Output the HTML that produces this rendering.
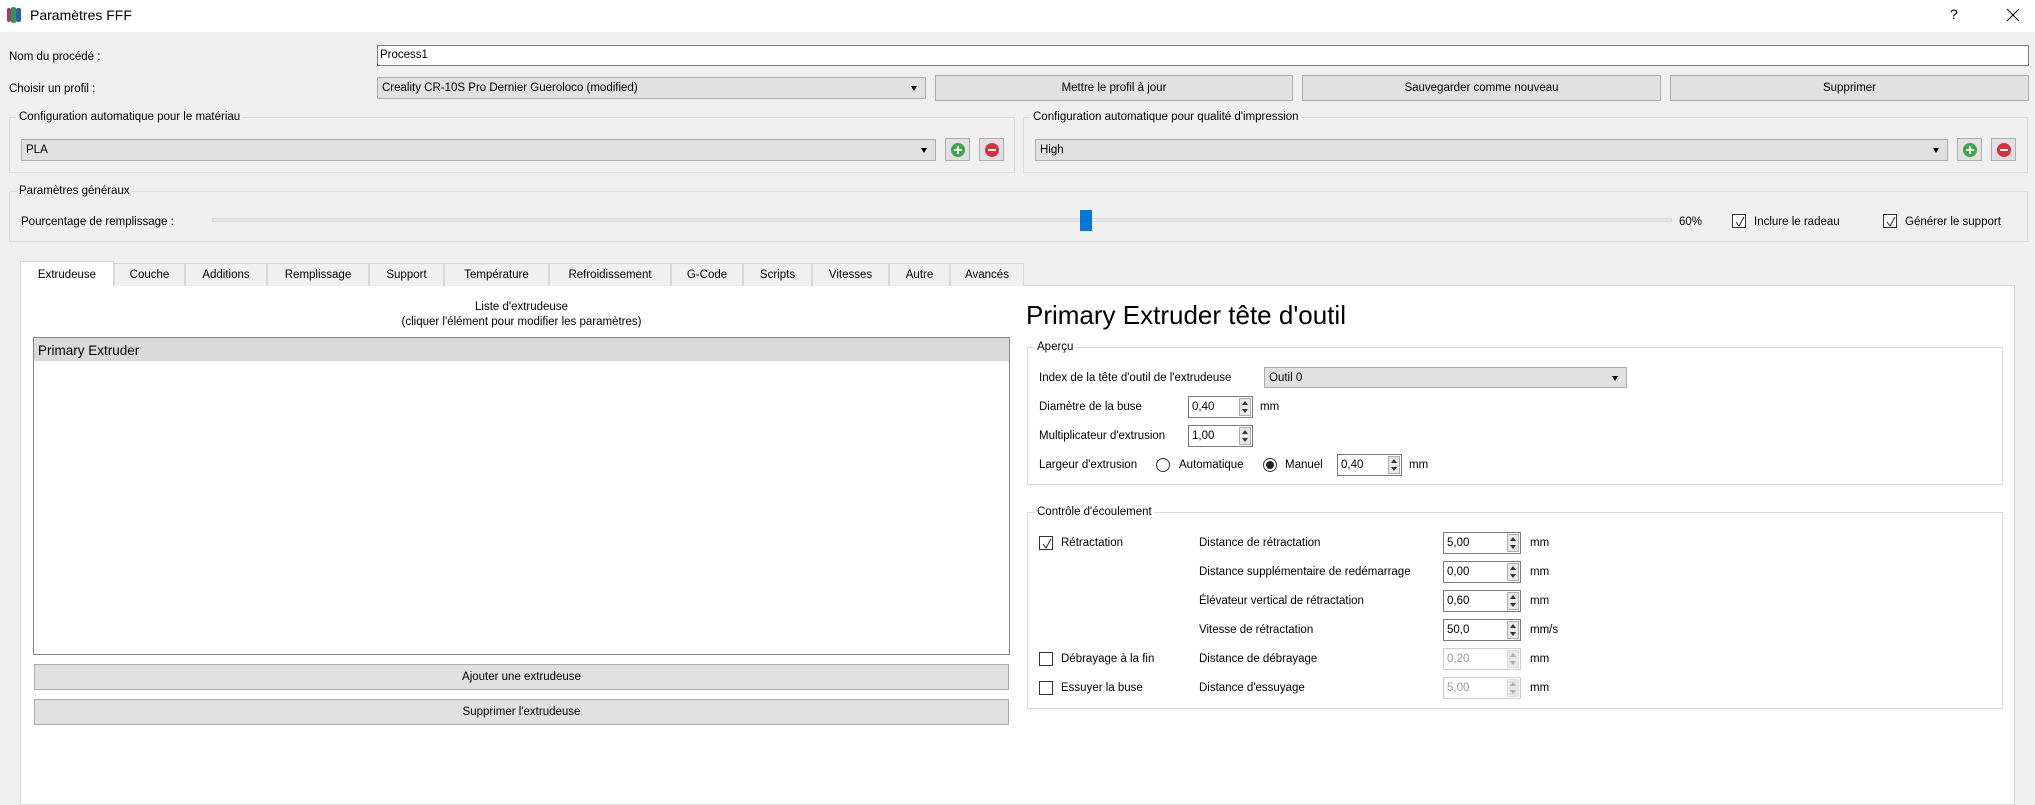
<!DOCTYPE html>
<html><head><meta charset="utf-8"><style>
*{box-sizing:border-box;margin:0;padding:0}
body{width:2035px;height:797px;background:#f0f0f0;font-family:"Liberation Sans",sans-serif;font-size:11.5px;color:#000;position:relative;overflow:hidden}
.a{position:absolute;white-space:nowrap}
.t{position:absolute;white-space:nowrap;line-height:14px;transform:translateY(-7px)}
.btn{position:absolute;background:#e1e1e1;border:1px solid #adadad;text-align:center;display:flex;align-items:center;justify-content:center}
.combo{position:absolute;background:#e1e1e1;border:1px solid #adadad;padding-left:4px;display:flex;align-items:center}
.combo:after{content:"";position:absolute;right:8px;top:50%;margin-top:-2px;border-left:3.5px solid transparent;border-right:3.5px solid transparent;border-top:5px solid #000}
.grp{position:absolute;border:1px solid #dcdcdc}
.gt{position:absolute;background:#f0f0f0;padding:0 2px;line-height:14px}
.gtw{background:#fff}
.cb{position:absolute;width:14px;height:14px;border:1px solid #333;background:#fff}
.cb svg{position:absolute;left:1px;top:1px}
.spin{position:absolute;height:22px;border:1px solid #7a7a7a;background:#fff;padding-left:3px;display:flex;align-items:center}
.spin .ar{position:absolute;right:1px;top:1px;bottom:1px;width:12px;border:1px solid #adadad;background:#e8e8e8}
.spin .ar:before{content:"";position:absolute;left:2px;top:2px;border-left:3px solid transparent;border-right:3px solid transparent;border-bottom:4px solid #333}
.spin .ar:after{content:"";position:absolute;left:2px;bottom:2px;border-left:3px solid transparent;border-right:3px solid transparent;border-top:4px solid #333}
.spin.dis{border-color:#ccc;color:#999}
.spin.dis .ar{border-color:#ddd}
.spin.dis .ar:before{border-bottom-color:#aaa}.spin.dis .ar:after{border-top-color:#aaa}
.tab{position:absolute;top:263px;height:23px;background:#f0f0f0;border:1px solid #d9d9d9;border-bottom:none;display:flex;align-items:center;justify-content:center}
.ib{position:absolute;width:25px;height:23px;border:1px solid #adadad;background:#e1e1e1}
.ib i{position:absolute;left:5px;top:4px;width:14px;height:14px;border-radius:50%}
.ib i:before{content:"";position:absolute;left:3px;top:6px;width:8px;height:2px;background:#fff}
.ib.p i{background:#3aa64a}.ib.p i:after{content:"";position:absolute;left:6px;top:3px;width:2px;height:8px;background:#fff}
.ib.m i{background:#d8303a}
.radio{position:absolute;width:14px;height:14px;border:1px solid #333;border-radius:50%;background:#fff}
</style></head><body>
<div class="a" style="left:0;top:0;width:2035px;height:32px;background:#fff"></div>
<div class="a" style="left:7px;top:8px;width:4px;height:14px;background:#b22f7a;border-radius:2px"></div>
<div class="a" style="left:11px;top:7px;width:5px;height:16px;background:#2a9a48;border-radius:2px"></div>
<div class="a" style="left:16px;top:8px;width:5px;height:14px;background:#2d5fb5;border-radius:2px"></div>
<div class="t" style="left:30px;top:15px;font-size:14px">Paramètres FFF</div>
<div class="t" style="left:1950px;top:14px;font-size:14px">?</div>
<svg class="a" style="left:2006px;top:8px" width="14" height="14"><path d="M1 1L13 13M13 1L1 13" stroke="#000" stroke-width="1"/></svg>

<div class="t" style="left:9px;top:57px">Nom du procédé :</div>
<div class="a" style="left:377px;top:45px;width:1652px;height:21px;background:#fff;border:1px solid #7a7a7a;padding-left:2px;line-height:19px">Process1</div>
<div class="t" style="left:9px;top:89px">Choisir un profil :</div>
<div class="combo" style="left:377px;top:77px;width:549px;height:22px">Creality CR-10S Pro Dernier Gueroloco (modified)</div>
<div class="btn" style="left:935px;top:75px;width:358px;height:26px">Mettre le profil à jour</div>
<div class="btn" style="left:1302px;top:75px;width:359px;height:26px">Sauvegarder comme nouveau</div>
<div class="btn" style="left:1670px;top:75px;width:359px;height:26px">Supprimer</div>

<div class="grp" style="left:9px;top:117px;width:1006px;height:56px"></div>
<div class="gt" style="left:17px;top:110px">Configuration automatique pour le matériau</div>
<div class="combo" style="left:21px;top:139px;width:915px;height:22px">PLA</div>
<div class="ib p" style="left:945px;top:138px"><i></i></div>
<div class="ib m" style="left:979px;top:138px"><i></i></div>

<div class="grp" style="left:1023px;top:117px;width:1005px;height:56px"></div>
<div class="gt" style="left:1031px;top:110px">Configuration automatique pour qualité d'impression</div>
<div class="combo" style="left:1035px;top:139px;width:913px;height:22px">High</div>
<div class="ib p" style="left:1957px;top:138px"><i></i></div>
<div class="ib m" style="left:1991px;top:138px"><i></i></div>

<div class="grp" style="left:9px;top:191px;width:2019px;height:51px"></div>
<div class="gt" style="left:17px;top:184px">Paramètres généraux</div>
<div class="t" style="left:21px;top:222px">Pourcentage de remplissage :</div>
<div class="a" style="left:212px;top:218px;width:1460px;height:4px;background:#e7e7e7;border:1px solid #d6d6d6"></div>
<div class="a" style="left:1080px;top:210px;width:12px;height:21px;background:#0078d7"></div>
<div class="t" style="left:1679px;top:222px">60%</div>
<div class="cb" style="left:1732px;top:214px"><svg width="12" height="12"><path d="M2 6L5 10L10 1" fill="none" stroke="#222" stroke-width="1"/></svg></div>
<div class="t" style="left:1754px;top:222px">Inclure le radeau</div>
<div class="cb" style="left:1883px;top:214px"><svg width="12" height="12"><path d="M2 6L5 10L10 1" fill="none" stroke="#222" stroke-width="1"/></svg></div>
<div class="t" style="left:1905px;top:222px">Générer le support</div>

<div class="a" style="left:20px;top:285px;width:1995px;height:520px;background:#fff;border:1px solid #d9d9d9"></div>
<div class="tab" style="left:20px;top:261px;height:26px;width:94px;background:#fff;border-color:#d9d9d9">Extrudeuse</div>
<div class="tab" style="left:114px;width:71px">Couche</div>
<div class="tab" style="left:185px;width:82px">Additions</div>
<div class="tab" style="left:267px;width:102px">Remplissage</div>
<div class="tab" style="left:369px;width:75px">Support</div>
<div class="tab" style="left:444px;width:105px">Température</div>
<div class="tab" style="left:549px;width:122px">Refroidissement</div>
<div class="tab" style="left:671px;width:72px">G-Code</div>
<div class="tab" style="left:743px;width:69px">Scripts</div>
<div class="tab" style="left:812px;width:77px">Vitesses</div>
<div class="tab" style="left:889px;width:61px">Autre</div>
<div class="tab" style="left:950px;width:74px">Avancés</div>

<div class="t" style="left:34px;width:975px;text-align:center;top:307px">Liste d'extrudeuse</div>
<div class="t" style="left:34px;width:975px;text-align:center;top:322px">(cliquer l'élément pour modifier les paramètres)</div>
<div class="a" style="left:33px;top:337px;width:977px;height:318px;border:1px solid #828790;background:#fff"></div>
<div class="a" style="left:34px;top:338px;width:975px;height:23px;background:#d9d9d9"></div>
<div class="t" style="left:38px;top:351px;font-size:13.5px">Primary Extruder</div>
<div class="btn" style="left:34px;top:664px;width:975px;height:26px">Ajouter une extrudeuse</div>
<div class="btn" style="left:34px;top:699px;width:975px;height:26px">Supprimer l'extrudeuse</div>

<div class="a" style="left:1026px;top:298px;font-size:26px;line-height:34px">Primary Extruder tête d'outil</div>
<div class="grp" style="left:1027px;top:347px;width:976px;height:138px"></div>
<div class="gt gtw" style="left:1035px;top:340px">Aperçu</div>
<div class="t" style="left:1039px;top:378px">Index de la tête d'outil de l'extrudeuse</div>
<div class="combo" style="left:1264px;top:367px;width:363px;height:21px">Outil 0</div>
<div class="t" style="left:1039px;top:407px">Diamètre de la buse</div>
<div class="spin" style="left:1188px;top:396px;width:65px">0,40<span class="ar"></span></div>
<div class="t" style="left:1260px;top:407px">mm</div>
<div class="t" style="left:1039px;top:436px">Multiplicateur d'extrusion</div>
<div class="spin" style="left:1188px;top:425px;width:65px">1,00<span class="ar"></span></div>
<div class="t" style="left:1039px;top:465px">Largeur d'extrusion</div>
<div class="radio" style="left:1156px;top:458px"></div>
<div class="t" style="left:1179px;top:465px">Automatique</div>
<div class="radio" style="left:1263px;top:458px"><div style="position:absolute;left:2px;top:2px;width:8px;height:8px;border-radius:50%;background:#222"></div></div>
<div class="t" style="left:1285px;top:465px">Manuel</div>
<div class="spin" style="left:1337px;top:454px;width:65px">0,40<span class="ar"></span></div>
<div class="t" style="left:1409px;top:465px">mm</div>

<div class="grp" style="left:1027px;top:512px;width:976px;height:197px"></div>
<div class="gt gtw" style="left:1035px;top:505px">Contrôle d'écoulement</div>
<div class="cb" style="left:1039px;top:536px"><svg width="12" height="12"><path d="M2 6L5 10L10 1" fill="none" stroke="#222" stroke-width="1"/></svg></div>
<div class="t" style="left:1061px;top:543px">Rétractation</div>
<div class="cb" style="left:1039px;top:652px"></div>
<div class="t" style="left:1061px;top:659px">Débrayage à la fin</div>
<div class="cb" style="left:1039px;top:681px"></div>
<div class="t" style="left:1061px;top:688px">Essuyer la buse</div>

<div class="t" style="left:1199px;top:543px">Distance de rétractation</div>
<div class="spin" style="left:1443px;top:532px;width:78px">5,00<span class="ar"></span></div>
<div class="t" style="left:1530px;top:543px">mm</div>
<div class="t" style="left:1199px;top:572px">Distance supplémentaire de redémarrage</div>
<div class="spin" style="left:1443px;top:561px;width:78px">0,00<span class="ar"></span></div>
<div class="t" style="left:1530px;top:572px">mm</div>
<div class="t" style="left:1199px;top:601px">Élévateur vertical de rétractation</div>
<div class="spin" style="left:1443px;top:590px;width:78px">0,60<span class="ar"></span></div>
<div class="t" style="left:1530px;top:601px">mm</div>
<div class="t" style="left:1199px;top:630px">Vitesse de rétractation</div>
<div class="spin" style="left:1443px;top:619px;width:78px">50,0<span class="ar"></span></div>
<div class="t" style="left:1530px;top:630px">mm/s</div>
<div class="t" style="left:1199px;top:659px">Distance de débrayage</div>
<div class="spin dis" style="left:1443px;top:648px;width:78px">0,20<span class="ar"></span></div>
<div class="t" style="left:1530px;top:659px">mm</div>
<div class="t" style="left:1199px;top:688px">Distance d'essuyage</div>
<div class="spin dis" style="left:1443px;top:677px;width:78px">5,00<span class="ar"></span></div>
<div class="t" style="left:1530px;top:688px">mm</div>
</body></html>
